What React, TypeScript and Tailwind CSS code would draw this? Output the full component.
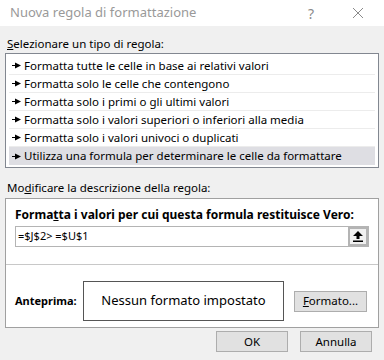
import type { ReactNode } from 'react'

const font = { fontFamily: '"Noto Sans", "Open Sans", sans-serif' }

const rules = [
  'Formatta tutte le celle in base ai relativi valori',
  'Formatta solo le celle che contengono',
  'Formatta solo i primi o gli ultimi valori',
  'Formatta solo i valori superiori o inferiori alla media',
  'Formatta solo i valori univoci o duplicati',
  'Utilizza una formula per determinare le celle da formattare',
]

function RuleArrow() {
  return (
    <svg width="9" height="7" viewBox="0 0 9 7" className="shrink-0">
      <rect x="0" y="3" width="4" height="1" fill="#000" />
      <path d="M3 0.5 L9 3.5 L3 6.5 Z" fill="#000" />
    </svg>
  )
}

function Button({ children, className }: { children: ReactNode; className: string }) {
  return (
    <div
      className={`flex items-center justify-center border border-[#adadad] bg-[#e1e1e1] text-[11.5px] text-black ${className}`}
    >
      {children}
    </div>
  )
}

export default function App() {
  return (
    <div style={font} className="flex h-[360px] w-[384px] flex-col overflow-hidden bg-[#f0f0f0] text-[11.5px] text-black">
      <div className="flex h-[26px] shrink-0 items-center bg-white pl-[10px]">
        <span className="text-[13px] text-[#999999]">Nuova regola di formattazione</span>
        <span className="ml-auto mr-[38px] text-[14px] text-[#8a8a8a]">?</span>
        <svg width="12" height="12" viewBox="0 0 12 12" className="mr-[20px]">
          <path d="M1 1 L11 11 M11 1 L1 11" stroke="#8a8a8a" strokeWidth="1" />
        </svg>
      </div>

      <div className="px-[5px] pt-[10px]">
        <div className="pl-[2px] leading-[16px]">
          <span className="underline">S</span>elezionare un tipo di regola:
        </div>
        <div className="mt-[1px] h-[115px] border border-[#828790] bg-white p-[3px]">
          {rules.map((r, i) => (
            <div
              key={r}
              className={`flex h-[18px] items-center gap-[3px] pl-[3px] ${
                i === rules.length - 1 ? 'bg-[#dedee3]' : 'border-b border-[#ececec]'
              }`}
            >
              <RuleArrow />
              <span className="leading-[16px]">{r}</span>
            </div>
          ))}
        </div>

        <div className="mt-[12px] pl-[2px] leading-[16px]">
          Mo<span className="underline">d</span>ificare la descrizione della regola:
        </div>
        <div className="mt-[2px] h-[130px] border border-[#a0a0a0] bg-white">
          <div className="px-[9px] pt-[8px]">
            <div className="text-[12px] font-bold leading-[16px]">
              Forma<span className="underline">t</span>ta i valori per cui questa formula restituisce Vero:
            </div>
            <div className="mt-[3px] flex h-[21px] items-center border border-[#b4b4b4] pl-[2px]">
              <span className="text-[11px]">=$J$2&gt; =$U$1</span>
              <div className="ml-auto flex h-[19px] w-[20px] items-center justify-center border-2 border-[#b4b4b4] bg-[#f0f0f0]">
                <svg width="10" height="11" viewBox="0 0 10 11">
                  <path d="M5 0 L10 5 L6.5 5 L6.5 8 L3.5 8 L3.5 5 L0 5 Z" fill="#000" />
                  <rect x="0" y="9.5" width="10" height="1.5" fill="#000" />
                </svg>
              </div>
            </div>
          </div>
          <div className="mt-[17px] border-t border-[#c8c8c8]" />
          <div className="flex items-center pl-[9px] pt-[16px]">
            <span className="w-[68px] text-[11px] font-bold">Anteprima:</span>
            <div className="flex h-[40px] w-[201px] items-center justify-center border border-[#555555] text-[13px]">
              Nessun formato impostato
            </div>
            <Button className="ml-[10px] h-[21px] w-[73px]">
              <span className="underline">F</span>ormato...
            </Button>
          </div>
        </div>

        <div className="mt-[3px] flex justify-end gap-[12px] pr-[7px]">
          <Button className="h-[21px] w-[72px]">OK</Button>
          <Button className="h-[21px] w-[72px]">Annulla</Button>
        </div>
      </div>
    </div>
  )
}
